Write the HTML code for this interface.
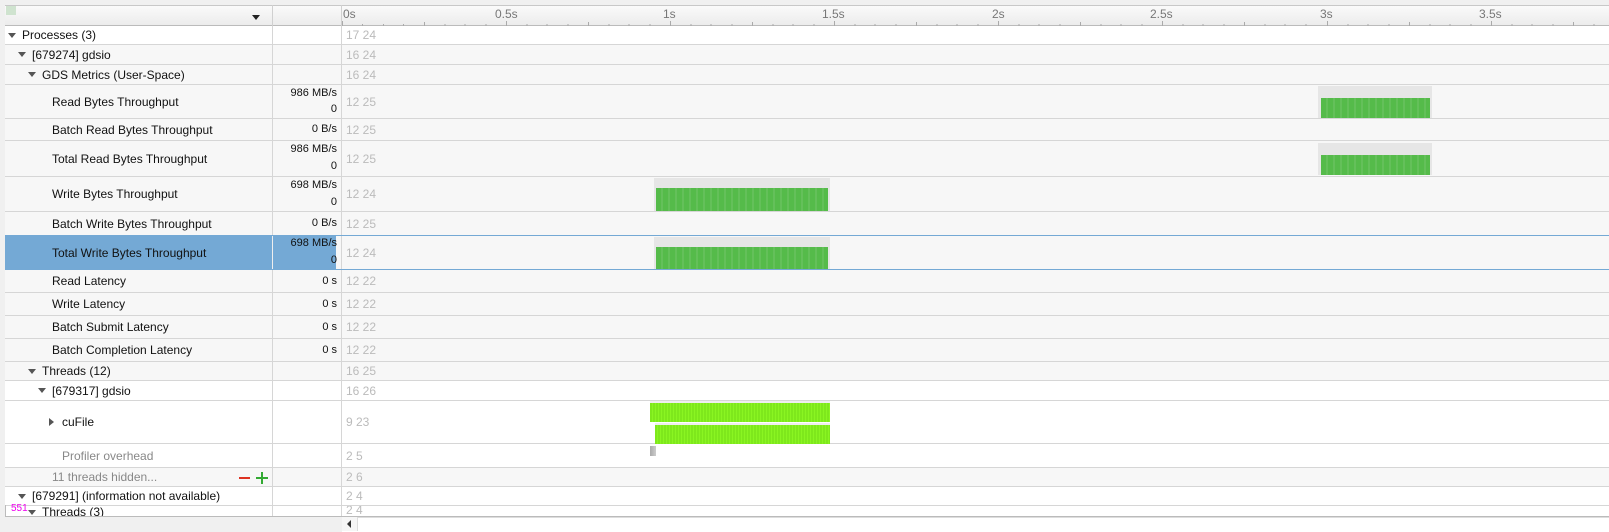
<!DOCTYPE html><html><head><style>
body{margin:0;width:1609px;height:532px;background:#f0f0f0;font-family:"Liberation Sans",sans-serif;font-size:12px;overflow:hidden;position:relative;color:#111}
.a{position:absolute}
.row{position:absolute;left:5px;width:1604px;background:#f7f7f7;border-bottom:1px solid #d6d6d6;box-sizing:border-box}
.w{background:#fff}
.l{position:absolute;top:0;bottom:0;display:flex;align-items:center;white-space:nowrap}
.v{position:absolute;left:267px;width:65px;text-align:right;font-size:11px}
.n{position:absolute;left:341px;color:#bbb;top:0;bottom:0;display:flex;align-items:center}
.d1{position:absolute;left:267px;top:0;bottom:0;border-left:1px solid #d6d6d6}
.d2{position:absolute;left:336px;top:0;bottom:0;border-left:1px solid #d6d6d6}
.tri{display:inline-block;width:0;height:0;border-left:4px solid transparent;border-right:4px solid transparent;border-top:5px solid #555;margin-right:6px}
.tr{display:inline-block;width:0;height:0;border-top:4px solid transparent;border-bottom:4px solid transparent;border-left:5px solid #555;margin-right:8px}
.chart{position:absolute;background:#e6e6e6;overflow:hidden}
.g{position:absolute;left:2px;right:2px;bottom:0;background:#55bb4a;
 -webkit-mask:repeating-linear-gradient(90deg,#000 0 5px,rgba(0,0,0,.9) 5px 7px)}
.cu{position:absolute;background:repeating-linear-gradient(90deg,#7ee81c 0 2px,#8af522 2px 3px);border-top:2px solid #eee}
</style></head><body>
<!-- header -->
<div class="a" style="left:5px;top:5px;width:1604px;height:21px;background:linear-gradient(#fafafa,#ececec);border-top:1px solid #c8c8c8;border-bottom:1px solid #bbb;box-sizing:border-box"></div>
<div class="a" style="left:6px;top:6px;width:10px;height:9px;background:#cfe3cf"></div>
<div class="a" style="left:252px;top:15px;border-left:4px solid transparent;border-right:4px solid transparent;border-top:5px solid #222"></div>
<div class="a" style="left:272px;top:5px;height:21px;border-left:1px solid #d0d0d0"></div>
<div class="a" style="left:341px;top:5px;height:21px;border-left:1px solid #d0d0d0"></div>
<svg class="a" style="left:0;top:0" width="1609" height="27">
<g fill="#777" font-family="Liberation Sans" font-size="12">
<text x="343" y="18">0s</text><text x="495" y="18">0.5s</text><text x="663" y="18">1s</text><text x="822" y="18">1.5s</text><text x="992" y="18">2s</text><text x="1150" y="18">2.5s</text><text x="1320" y="18">3s</text><text x="1479" y="18">3.5s</text></g>
<g stroke="#aaa" stroke-width="1">
<path d="M342.5 26v-5M362.5 26v-2M383.5 26v-2M403.5 26v-2M424.5 26v-4M445 26v-2M465 26v-2M486 26v-2M506.5 26v-5M527 26v-2M547 26v-2M568 26v-2M588.5 26v-4M609 26v-2M629 26v-2M650 26v-2M670.5 26v-5M691 26v-2M711 26v-2M732 26v-2M752.5 26v-4M773 26v-2M793 26v-2M814 26v-2M834.5 26v-5M855 26v-2M875 26v-2M896 26v-2M916.5 26v-4M937 26v-2M957 26v-2M978 26v-2M998.5 26v-5M1019 26v-2M1039 26v-2M1060 26v-2M1080.5 26v-4M1101 26v-2M1121 26v-2M1142 26v-2M1162.5 26v-5M1183 26v-2M1203 26v-2M1224 26v-2M1244.5 26v-4M1265 26v-2M1285 26v-2M1306 26v-2M1327.5 26v-5M1348 26v-2M1368 26v-2M1389 26v-2M1409.5 26v-4M1430 26v-2M1450 26v-2M1471 26v-2M1491.5 26v-5M1512 26v-2M1532 26v-2M1553 26v-2M1573.5 26v-4M1594 26v-2"/></g></svg>

<div class="row w" style="top:26px;height:19px"><div class="l" style="left:3px"><span class="tri"></span>Processes (3)</div><div class="d1"></div><div class="d2"></div><div class="n">17 24</div></div>
<div class="row" style="top:45px;height:20px"><div class="l" style="left:13px"><span class="tri"></span>[679274] gdsio</div><div class="d1"></div><div class="d2"></div><div class="n">16 24</div></div>
<div class="row" style="top:65px;height:20px"><div class="l" style="left:23px"><span class="tri"></span>GDS Metrics (User-Space)</div><div class="d1"></div><div class="d2"></div><div class="n">16 24</div></div>
<div class="row" style="top:85px;height:34px"><div class="l" style="left:47px">Read Bytes Throughput</div><div class="v" style="top:2px">986 MB/s</div><div class="v" style="top:18px">0</div><div class="d1"></div><div class="d2"></div><div class="n">12 25</div></div>
<div class="row" style="top:119px;height:22px"><div class="l" style="left:47px">Batch Read Bytes Throughput</div><div class="v" style="top:4px">0 B/s</div><div class="d1"></div><div class="d2"></div><div class="n">12 25</div></div>
<div class="row" style="top:141px;height:36px"><div class="l" style="left:47px">Total Read Bytes Throughput</div><div class="v" style="top:2px">986 MB/s</div><div class="v" style="top:19px">0</div><div class="d1"></div><div class="d2"></div><div class="n">12 25</div></div>
<div class="row" style="top:177px;height:35px"><div class="l" style="left:47px">Write Bytes Throughput</div><div class="v" style="top:2px">698 MB/s</div><div class="v" style="top:19px">0</div><div class="d1"></div><div class="d2"></div><div class="n">12 24</div></div>
<div class="row" style="top:212px;height:24px"><div class="l" style="left:47px">Batch Write Bytes Throughput</div><div class="v" style="top:5px">0 B/s</div><div class="d1"></div><div class="d2"></div><div class="n">12 25</div></div>
<div class="row" style="top:235px;height:35px;border-top:1px solid #74a9d5;border-bottom:1px solid #74a9d5"><div class="a" style="left:0;top:0;width:331px;height:100%;background:#74a9d5"></div><div class="l" style="left:47px">Total Write Bytes Throughput</div><div class="v" style="top:1px">698 MB/s</div><div class="v" style="top:18px">0</div><div class="d1" style="border-color:#eee"></div><div class="d2"></div><div class="n">12 24</div></div>
<div class="row" style="top:270px;height:23px"><div class="l" style="left:47px">Read Latency</div><div class="v" style="top:5px">0 s</div><div class="d1"></div><div class="d2"></div><div class="n">12 22</div></div>
<div class="row" style="top:293px;height:23px"><div class="l" style="left:47px">Write Latency</div><div class="v" style="top:5px">0 s</div><div class="d1"></div><div class="d2"></div><div class="n">12 22</div></div>
<div class="row" style="top:316px;height:23px"><div class="l" style="left:47px">Batch Submit Latency</div><div class="v" style="top:5px">0 s</div><div class="d1"></div><div class="d2"></div><div class="n">12 22</div></div>
<div class="row" style="top:339px;height:23px"><div class="l" style="left:47px">Batch Completion Latency</div><div class="v" style="top:5px">0 s</div><div class="d1"></div><div class="d2"></div><div class="n">12 22</div></div>
<div class="row" style="top:362px;height:19px"><div class="l" style="left:23px"><span class="tri"></span>Threads (12)</div><div class="d1"></div><div class="d2"></div><div class="n">16 25</div></div>
<div class="row w" style="top:381px;height:20px"><div class="l" style="left:33px"><span class="tri"></span>[679317] gdsio</div><div class="d1"></div><div class="d2"></div><div class="n">16 26</div></div>
<div class="row w" style="top:401px;height:43px"><div class="l" style="left:44px"><span class="tr"></span>cuFile</div><div class="d1"></div><div class="d2"></div><div class="n">9 23</div></div>
<div class="row w" style="top:444px;height:24px"><div class="l" style="left:57px;color:#888">Profiler overhead</div><div class="d1"></div><div class="d2"></div><div class="n">2 5</div></div>
<div class="row" style="top:468px;height:19px"><div class="l" style="left:47px;color:#888">11 threads hidden...</div><div class="a" style="left:234px;top:9px;width:11px;height:2px;background:#d32"></div><div class="a" style="left:251px;top:9px;width:12px;height:2px;background:#3a3"></div><div class="a" style="left:256px;top:4px;width:2px;height:12px;background:#3a3"></div><div class="d1"></div><div class="d2"></div><div class="n">2 6</div></div>
<div class="row w" style="top:487px;height:19px"><div class="l" style="left:13px"><span class="tri"></span>[679291] (information not available)</div><div class="d1"></div><div class="d2"></div><div class="n">2 4</div></div>
<div class="row w" style="top:506px;height:11px;overflow:hidden;border-bottom:1px solid #bbb"><div class="l" style="left:23px;top:-2px;bottom:auto;height:16px"><span class="tri"></span>Threads (3)</div><div class="d1"></div><div class="d2"></div><div class="n" style="top:-3px;bottom:auto">2 4</div></div>
<div class="a" style="left:11px;top:503px;color:#e0e;font-size:10px">551</div>
<div class="a" style="left:5px;top:505px;height:12px;border-left:1px solid #bbb"></div>
<!-- scrollbar -->
<div class="a" style="left:342px;top:517px;width:1267px;height:14px;background:#fff;border-top:1px solid #ddd"></div>
<div class="a" style="left:342px;top:517px;width:15px;height:14px;border-right:1px solid #ddd;background:#f6f6f6"></div>
<div class="a" style="left:347px;top:520px;border-top:4px solid transparent;border-bottom:4px solid transparent;border-right:4px solid #333"></div>
<!-- charts -->
<div class="chart" style="left:1318px;top:86px;width:114px;height:32px"><div class="g" style="height:20px;top:12px;left:3px"></div></div>
<div class="chart" style="left:1318px;top:143px;width:114px;height:32px"><div class="g" style="height:20px;top:12px;left:3px"></div></div>
<div class="chart" style="left:654px;top:178px;width:176px;height:33px"><div class="g" style="top:10px"></div></div>
<div class="chart" style="left:654px;top:237px;width:176px;height:32px"><div class="g" style="top:10px"></div></div>
<div class="cu" style="left:650px;top:401px;width:180px;height:19px"></div>
<div class="cu" style="left:655px;top:423px;width:175px;height:19px"></div>
<div class="a" style="left:650px;top:446px;width:6px;height:10px;background:linear-gradient(90deg,#aaa,#ccc)"></div>
</body></html>
